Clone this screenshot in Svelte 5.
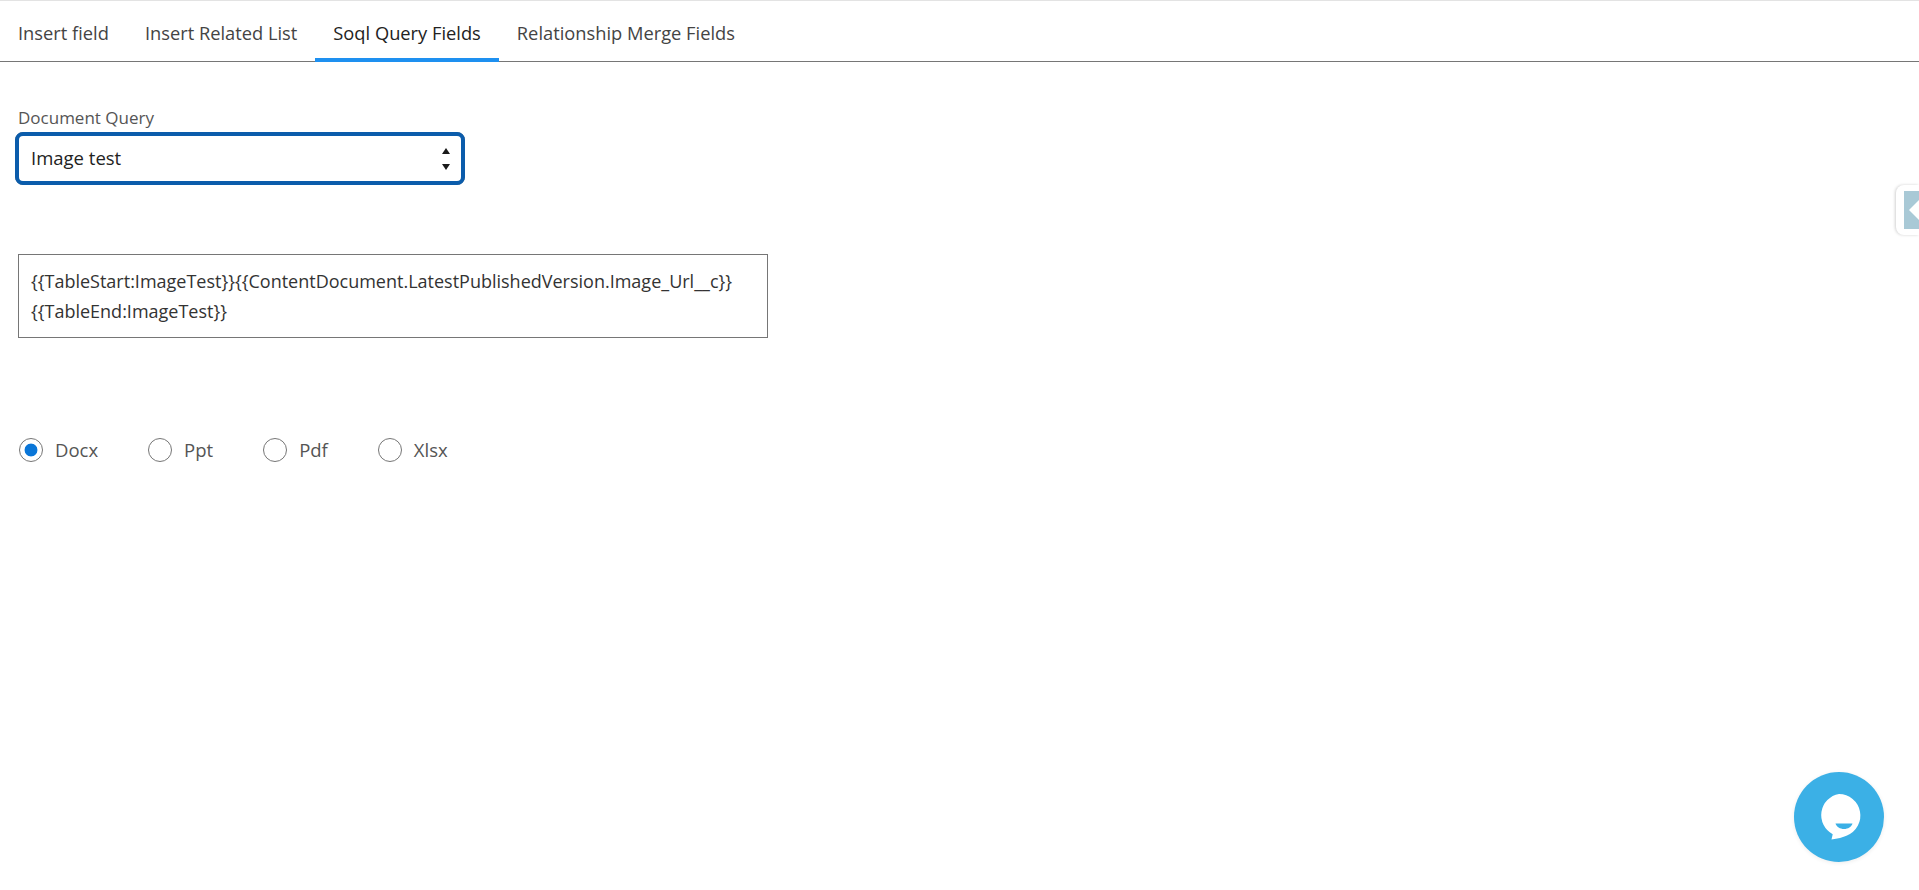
<script>
  const tabs = ['Insert field', 'Insert Related List', 'Soql Query Fields', 'Relationship Merge Fields'];
  const formats = ['Docx', 'Ppt', 'Pdf', 'Xlsx'];
  let activeTab = $state(2);
  let format = $state('Docx');
  let query = $state('Image test');
</script>

<div class="page">
  <nav class="tabs">
    {#each tabs as tab, i}
      <button class="tab" class:active={activeTab === i} onclick={() => (activeTab = i)}>{tab}</button>
    {/each}
  </nav>

  <section class="content">
    <label class="field-label" for="doc-query">Document Query</label>
    <div class="select-wrap">
      <select id="doc-query" bind:value={query}>
        <option>Image test</option>
      </select>
      <svg class="select-arrows" width="8" height="22" viewBox="0 0 8 22" aria-hidden="true">
        <path d="M4 0 8 6H0z" />
        <path d="M0 16h8l-4 6z" />
      </svg>
    </div>

    <div class="merge-box">
      {'{{TableStart:ImageTest}}{{ContentDocument.LatestPublishedVersion.Image_Url__c}}'}
      {'{{TableEnd:ImageTest}}'}
    </div>

    <div class="formats">
      {#each formats as f}
        <label class="radio">
          <input type="radio" name="format" value={f} bind:group={format} />
          <span>{f}</span>
        </label>
      {/each}
    </div>
  </section>

  <!-- collapsed side panel handle -->
  <div class="side-handle">
    <div class="side-inner"><span class="side-arrow"></span></div>
  </div>

  <button class="chat" aria-label="Open chat">
    <svg width="50" height="52" viewBox="0 0 50 52">
      <path fill="#fff" d="M25 3a21.5 21.5 0 0 1 8 41.4c-4 1.7-9.500 3.300-15.500 4.100l1.200-5.300A21.500 21.500 0 0 1 25 3z" />
      <path fill="#3bb0e6" d="M21.500 32.500h17c-1 3.300-4.500 5.500-8.500 5.500s-7.500-2.200-8.500-5.500z" />
    </svg>
  </button>
</div>

<style>
  :global(body) {
    background: #fff;
    font-family: "Open Sans", "Noto Sans", sans-serif;
  }
  .page {
    height: 890px;
    overflow: hidden;
    box-sizing: border-box;
    border-top: 1px solid #e3e3e3;
    position: relative;
    color: #444;
  }

  .tabs {
    display: flex;
    height: 60px;
    border-bottom: 1px solid #767676;
  }
  .tab {
    height: 61px;
    padding: 5px 18px 0;
    background: none;
    border: 0;
    border-bottom: 4px solid transparent;
    font: inherit;
    font-size: 18.3px;
    color: #444;
    cursor: pointer;
  }
  .tab.active {
    color: #222;
    border-bottom-color: #1e90f0;
  }

  .content {
    padding: 45px 18px 0;
  }
  .field-label {
    display: block;
    font-size: 17px;
    line-height: 22px;
    color: #555;
  }

  .select-wrap {
    position: relative;
    width: 450px;
    margin: 3px 0 0 -3px;
  }
  .select-wrap select {
    appearance: none;
    display: block;
    width: 100%;
    height: 53px;
    box-sizing: border-box;
    padding: 0 15px 2px;
    border: 1px solid #767676;
    border-radius: 8px;
    outline: 4px solid #0b5cab;
    outline-offset: -4px;
    background: #fff;
    font: inherit;
    font-size: 18.5px;
    color: #222;
  }
  .select-arrows {
    position: absolute;
    right: 15px;
    top: 16px;
    fill: #1a1a1a;
    pointer-events: none;
  }

  .merge-box {
    box-sizing: border-box;
    width: 750px;
    height: 84px;
    margin-top: 69px;
    padding: 11px 12px 0;
    border: 1px solid #767676;
    font-size: 18px;
    line-height: 30px;
    color: #333;
  }

  .formats {
    display: flex;
    gap: 49px;
    margin-top: 99px;
  }
  .radio {
    display: flex;
    align-items: center;
    gap: 12px;
    font-size: 18.5px;
    line-height: 26px;
    color: #555;
  }
  .radio input {
    appearance: none;
    width: 24px;
    height: 24px;
    margin: 0 0 0 1px;
    box-sizing: border-box;
    border: 1px solid #767676;
    border-radius: 50%;
    background: #fff;
  }
  .radio input:checked {
    background: radial-gradient(circle, #0a76d8 0 6px, transparent 6.8px);
  }

  .side-handle {
    position: absolute;
    top: 184px;
    right: 0;
    width: 23px;
    height: 50px;
    box-sizing: border-box;
    padding: 6px 0 6px 8px;
    background: #fff;
    border-radius: 8px 0 0 8px;
    box-shadow: -1px 0 3px rgba(0, 0, 0, 0.18);
  }
  .side-inner {
    height: 100%;
    background: #a9c9d6;
    display: flex;
    align-items: center;
    padding-left: 5px;
  }
  .side-arrow {
    border-right: 10px solid #fff;
    border-top: 10px solid transparent;
    border-bottom: 10px solid transparent;
  }

  .chat {
    position: absolute;
    left: 1794px;
    top: 771px;
    width: 90px;
    height: 90px;
    padding: 0;
    display: flex;
    align-items: center;
    justify-content: center;
    border: 0;
    border-radius: 50%;
    background: #3bb0e6;
    box-shadow: 0 1px 4px rgba(0, 0, 0, 0.08);
    cursor: pointer;
  }
</style>
